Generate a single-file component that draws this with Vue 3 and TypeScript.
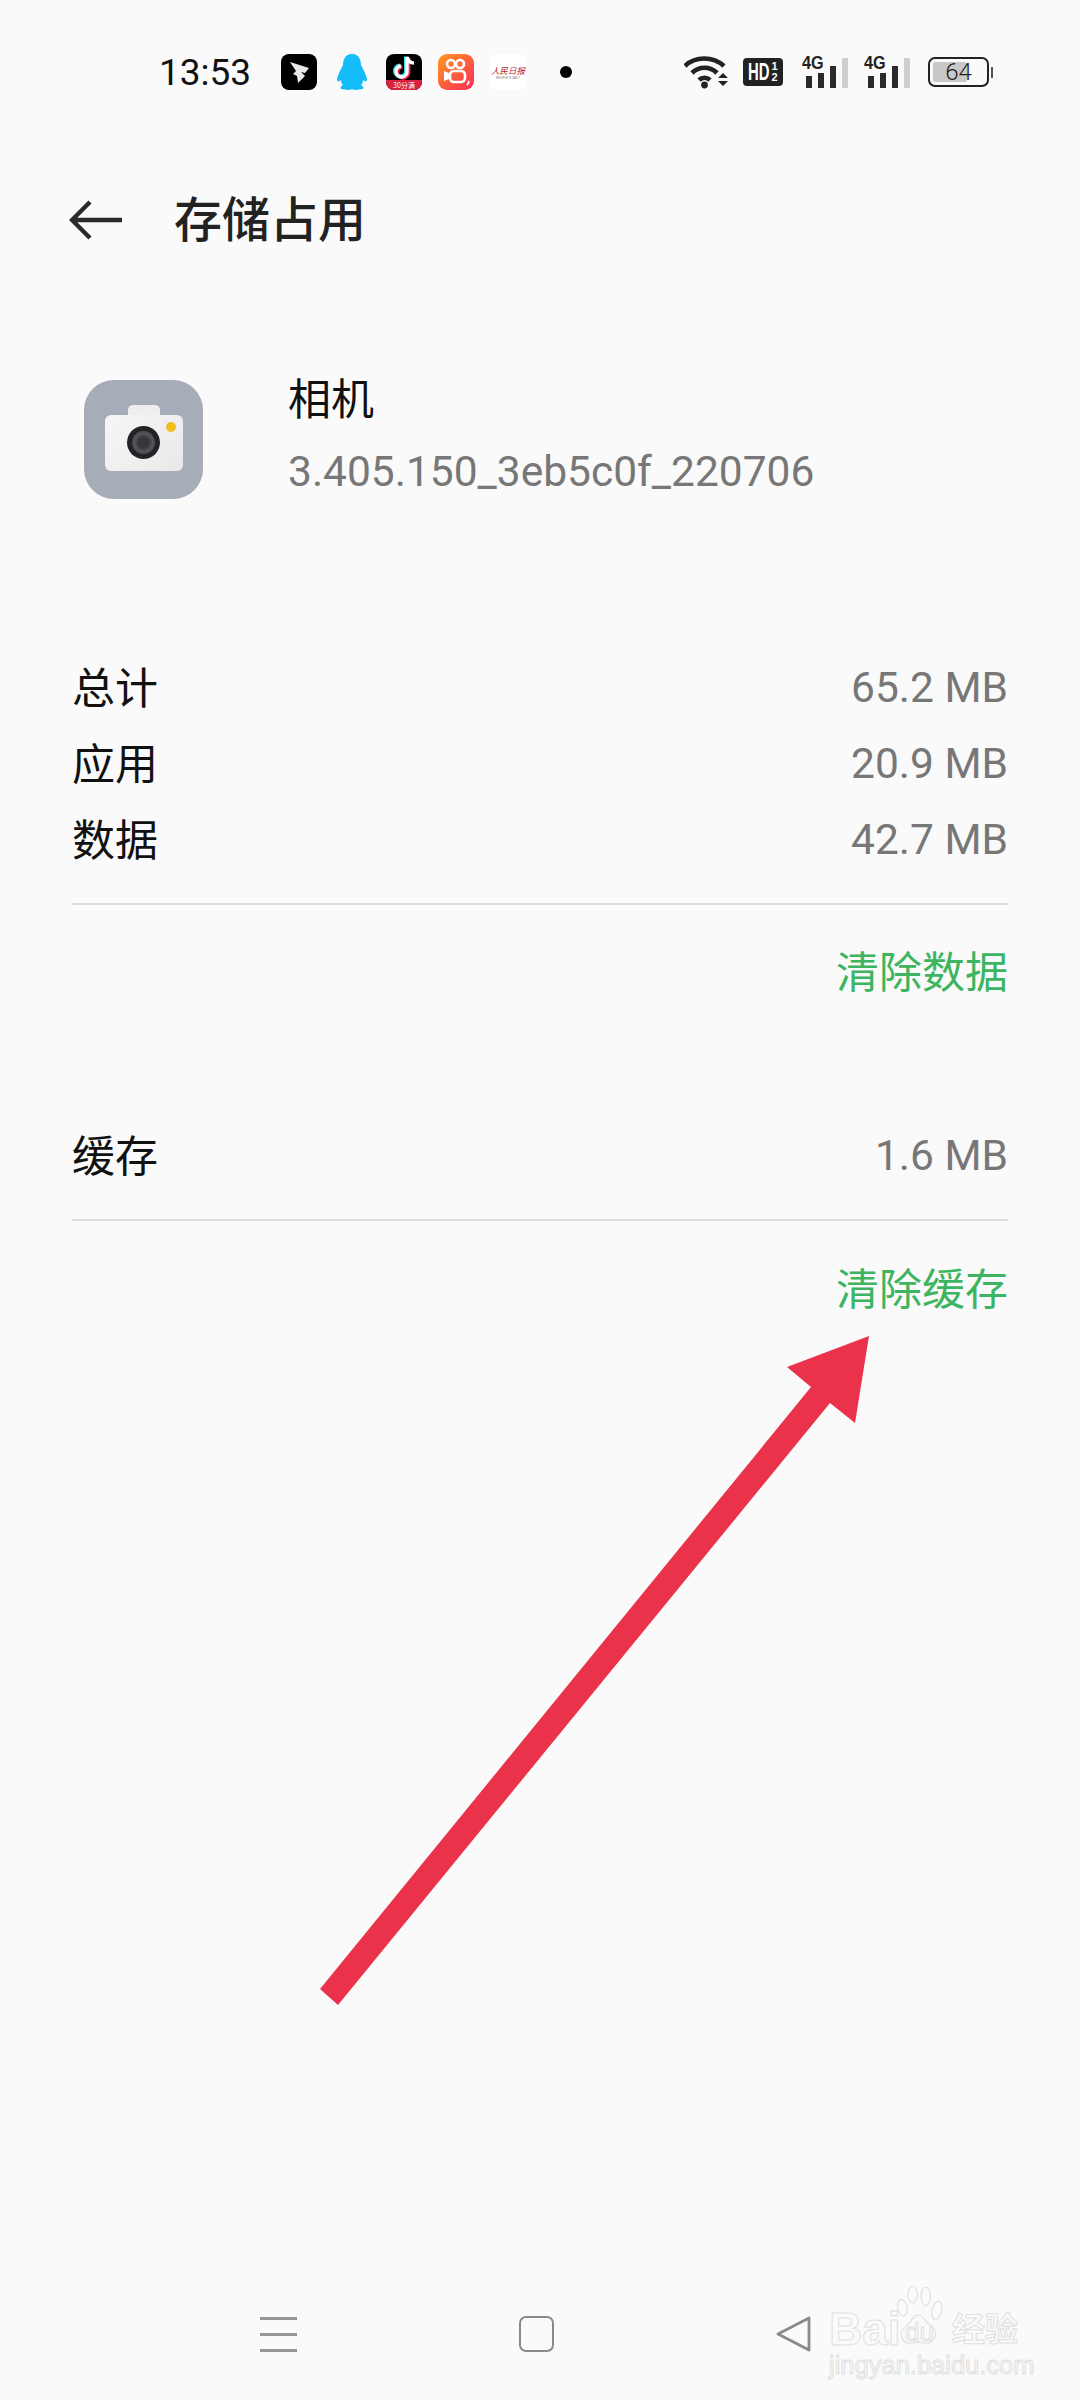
<script setup lang="ts">
const sizes = [
  { label: '总计', value: '65.2 MB' },
  { label: '应用', value: '20.9 MB' },
  { label: '数据', value: '42.7 MB' },
]
const bars = [12, 15, 22, 30]
</script>

<template>
  <div class="page">
    <div class="status">
      <span class="time">13:53</span>
      <div class="notifs">
        <svg class="ic" viewBox="0 0 36 36">
          <rect width="36" height="36" rx="8" fill="#000" />
          <path d="M9 8 L28 14 L24 19 L20 18 L24 22 L17 29 L16 22 L12 20 L15 17 Z" fill="#e9e9e9" />
        </svg>
        <svg class="qq" viewBox="0 0 32 36">
          <path d="M16 0 C23 0 25 6 25 11 C27 15 30 20 31 25 C31 28 29 28 27 26 C27 29 26 30 25 31 C27 32 28 33 27 35 L19 36 C17 35 15 35 13 36 L5 35 C4 33 5 32 7 31 C6 30 5 29 5 26 C3 28 1 28 1 25 C2 20 5 15 7 11 C7 6 9 0 16 0 Z" fill="#14bdf7" />
        </svg>
        <div class="douyin">
          <svg class="ic-note" viewBox="0 0 36 26">
            <path d="M21 3 L21 17 A5.5 5.5 0 1 1 15 12" fill="none" stroke="#f5285a" stroke-width="4" transform="translate(1.4 .8)" />
            <path d="M21 3 L21 17 A5.5 5.5 0 1 1 15 12" fill="none" stroke="#3ce0e8" stroke-width="4" transform="translate(-1 -.6)" />
            <path d="M21 3 L21 17 A5.5 5.5 0 1 1 15 12 M21 3 C22 7 25 9 28 9" fill="none" stroke="#fff" stroke-width="3.4" />
          </svg>
          <span class="dy-band">30分满</span>
        </div>
        <svg class="ic" viewBox="0 0 36 36">
          <defs>
            <linearGradient id="ks" x1="0" y1="0" x2="1" y2="1">
              <stop offset="0" stop-color="#ff9a1f" />
              <stop offset="1" stop-color="#fb2a5c" />
            </linearGradient>
          </defs>
          <rect width="36" height="36" rx="9" fill="url(#ks)" />
          <g fill="none" stroke="#fff" stroke-width="2.6">
            <circle cx="13" cy="10" r="4" />
            <circle cx="22" cy="10" r="4" />
            <rect x="12" y="17" width="15" height="11" rx="4" />
          </g>
          <path d="M11 19 L6 17 L6 27 L11 25 Z" fill="#fff" />
          <path d="M30 27 L31 28 L29 31" stroke="#fff" stroke-width="1.6" fill="none" />
        </svg>
        <div class="daily">
          <span class="daily-name">人民日报</span>
          <span class="daily-en">PEOPLE'S DAILY</span>
        </div>
      </div>
      <span class="dot"></span>
      <div class="sys">
        <svg class="wifi" viewBox="0 0 44 34">
          <g fill="none" stroke="#222" stroke-width="4.6">
            <path d="M1 11 C11 1 29 1 40 11" />
            <path d="M8 18 C15 11 26 11 33 18" />
            <path d="M15 25 C18 22 23 22 26 25" />
          </g>
          <circle cx="20.5" cy="30" r="3.4" fill="#222" />
          <path d="M34 23 L44 23 L39 18 Z M34 26 L44 26 L39 31 Z" fill="#222" />
        </svg>
        <div class="hd"><span class="hd-main">HD</span><span class="hd-sub">1<br />2</span></div>
        <div v-for="n in 2" :key="n" class="signal">
          <span class="four-g">4G</span>
          <div class="bars">
            <i v-for="(h, i) in bars" :key="h" :class="{ off: i === 3 }" :style="{ height: h + 'px' }"></i>
          </div>
        </div>
        <div class="battery">
          <div class="batt-body"><span class="batt-fill"></span><span class="batt-num">64</span></div>
          <span class="batt-nub"></span>
        </div>
      </div>
    </div>

    <header class="head">
      <svg class="back" viewBox="0 0 54 42">
        <path d="M21 3 L3 21 L21 39 M3 21 L53 21" fill="none" stroke="#2a2a2a" stroke-width="4.4" />
      </svg>
      <h1>存储占用</h1>
    </header>

    <section class="app">
      <div class="app-icon">
        <div class="cam-top"></div>
        <div class="cam">
          <span class="lens"></span>
          <span class="flash"></span>
        </div>
      </div>
      <div class="app-text">
        <div class="app-name">相机</div>
        <div class="app-ver">3.405.150_3eb5c0f_220706</div>
      </div>
    </section>

    <section class="sizes">
      <div v-for="r in sizes" :key="r.label" class="row">
        <span class="label">{{ r.label }}</span>
        <span class="value">{{ r.value }}</span>
      </div>
    </section>
    <div class="line"></div>
    <div class="action">清除数据</div>

    <section class="cache">
      <div class="row">
        <span class="label">缓存</span>
        <span class="value">1.6 MB</span>
      </div>
    </section>
    <div class="line line2"></div>
    <div class="action action2">清除缓存</div>

    <nav class="nav">
      <div class="menu"><i></i><i></i><i></i></div>
      <div class="home"></div>
      <svg class="tri" viewBox="0 0 35 36">
        <path d="M33 2 L2 18 L33 34 Z" fill="none" stroke="#8a8a8a" stroke-width="2.8" stroke-linejoin="round" />
      </svg>
    </nav>

    <!-- annotation drawn over the screenshot -->
    <svg class="arrow" viewBox="0 0 1080 2400">
      <path d="M320 1989 L811 1387 L787 1367 L869 1336 L855 1423 L830 1403 L338 2005 Z" fill="#ea334a" />
    </svg>

    <div class="mark">
      <svg class="paw" viewBox="0 0 60 66">
        <g fill="#fafafa" stroke="#e2e2e2" stroke-width="1.4">
          <ellipse cx="9" cy="24" rx="5" ry="9" transform="rotate(-12 9 24)" />
          <ellipse cx="20" cy="10" rx="5" ry="9" />
          <ellipse cx="34" cy="12" rx="5" ry="10" />
          <ellipse cx="46" cy="27" rx="5" ry="10" transform="rotate(14 46 27)" />
          <path d="M26 32 C32 32 33 40 40 44 C48 49 44 63 34 62 C28 61 24 61 18 62 C8 63 4 50 12 45 C19 41 19 32 26 32 Z" />
        </g>
      </svg>
      <span class="mark-bai">Bai</span>
      <span class="mark-du">du</span>
      <span class="mark-jy">经验</span>
      <span class="mark-url">jingyan.baidu.com</span>
    </div>
  </div>
</template>

<style scoped>
.page {
  position: relative;
  width: 1080px;
  height: 2400px;
  overflow: hidden;
  background: #fafafa;
  font-family: "Noto Sans CJK SC", Roboto, sans-serif;
}
.status {
  height: 144px;
  display: flex;
  align-items: center;
  box-sizing: border-box;
  padding-left: 159px;
}
.time {
  width: 122px;
  font: 400 37px Roboto, sans-serif;
  color: #111;
}
.notifs {
  display: flex;
  align-items: center;
  gap: 16px;
  width: 245px;
}
.ic { width: 36px; height: 36px; display: block; }
.qq { width: 32px; height: 36px; display: block; margin-left: 3px; margin-right: 2px; }
.douyin {
  width: 36px;
  height: 36px;
  background: #000;
  border-radius: 8px;
  overflow: hidden;
  display: flex;
  flex-direction: column;
}
.ic-note { width: 36px; height: 26px; display: block; }
.dy-band {
  height: 10px;
  line-height: 10px;
  background: #d8203f;
  color: #fff;
  font-size: 7px;
  text-align: center;
}
.daily {
  width: 36px;
  height: 36px;
  background: #fff;
  border-radius: 8px;
  display: flex;
  flex-direction: column;
  align-items: center;
  justify-content: center;
  overflow: hidden;
}
.daily-name { font: italic 8.5px/11px "Noto Sans CJK SC", sans-serif; color: #b3262b; white-space: nowrap; }
.daily-en { font: 3px/4px "Liberation Sans", sans-serif; color: #777; white-space: nowrap; }
.dot {
  width: 12px;
  height: 12px;
  border-radius: 50%;
  background: #000;
  margin-left: 34px;
}
.sys {
  display: flex;
  align-items: center;
  margin-left: 112px;
}
.wifi { width: 44px; height: 34px; display: block; margin-right: 15px; }
.hd {
  width: 40px;
  height: 28px;
  background: #222;
  border-radius: 4px;
  color: #fff;
  display: flex;
  align-items: center;
  justify-content: center;
  margin-right: 19px;
  font-family: "Liberation Sans", sans-serif;
  font-weight: 700;
}
.hd-main {
  font-size: 24px;
  width: 22px;
  transform: scaleX(0.62);
  transform-origin: left center;
  white-space: nowrap;
}
.hd-sub { font-size: 11px; line-height: 11px; margin-left: 1px; }
.signal {
  width: 46px;
  height: 32px;
  position: relative;
  margin-right: 16px;
}
.four-g {
  position: absolute;
  left: 0;
  top: -2px;
  font: 700 18px/18px "Liberation Sans", sans-serif;
  transform: scaleX(0.9);
  transform-origin: left top;
  color: #222;
}
.bars {
  position: absolute;
  left: 4px;
  right: 0;
  bottom: 0;
  display: flex;
  align-items: flex-end;
  gap: 6px;
}
.bars i {
  width: 6px;
  background: #2a2a2a;
  display: block;
}
.bars i.off { background: #cfcfcf; }
.battery { display: flex; align-items: center; gap: 2px; margin-left: 2px; }
.batt-body {
  position: relative;
  width: 61px;
  height: 30px;
  box-sizing: border-box;
  border: 2px solid #222;
  border-radius: 7px;
}
.batt-fill {
  position: absolute;
  left: 3px;
  top: 3px;
  bottom: 3px;
  width: 34px;
  background: #c9c9c9;
  border-radius: 2px;
}
.batt-num {
  position: absolute;
  inset: 0;
  text-align: center;
  font: 300 24px/26px Roboto, sans-serif;
  color: #222;
}
.batt-nub { width: 2px; height: 11px; background: #555; }

.head {
  height: 152px;
  display: flex;
  align-items: center;
  padding-left: 69px;
  box-sizing: border-box;
}
.back { width: 54px; height: 42px; display: block; }
h1 {
  margin: -8px 0 0 51px;
  font-size: 48px;
  font-weight: 500;
  color: #222;
  line-height: 1;
}
.app {
  display: flex;
  align-items: flex-start;
  padding: 84px 0 0 84px;
  gap: 85px;
}
.app-icon {
  position: relative;
  width: 119px;
  height: 119px;
  border-radius: 30px;
  background: #a6acb8;
  flex: none;
}
.cam-top {
  position: absolute;
  left: 44px;
  top: 25px;
  width: 32px;
  height: 14px;
  background: #eeeeef;
  border-radius: 5px 5px 0 0;
}
.cam {
  position: absolute;
  left: 21px;
  top: 35px;
  width: 78px;
  height: 56px;
  background: linear-gradient(135deg, #f6f6f6, #e9e9ea);
  border-radius: 6px;
}
.lens {
  position: absolute;
  left: 22px;
  top: 11px;
  width: 33px;
  height: 33px;
  border-radius: 50%;
  background: radial-gradient(circle, #35363b 0 5px, #55565c 9px, #4b4c52 11px, #232327 12px);
}
.flash {
  position: absolute;
  left: 61px;
  top: 7px;
  width: 10px;
  height: 10px;
  border-radius: 50%;
  background: #f2be1f;
}
.app-text { margin-top: -9px; }
.app-name {
  font-size: 43px;
  line-height: 50px;
  color: #111;
}
.app-ver {
  margin-top: 26px;
  font: 400 42.5px/50px Roboto, sans-serif;
  color: #777;
}
.sizes {
  margin-top: 148px;
  padding: 0 72px;
}
.cache {
  margin-top: 118px;
  padding: 0 72px;
}
.row {
  height: 76px;
  display: flex;
  align-items: center;
  justify-content: space-between;
}
.label { font-size: 43px; color: #111; }
.value { font: 400 42.5px Roboto, sans-serif; color: #777; margin-top: 4px; }
.line {
  height: 2px;
  margin: 28px 72px 0 72px;
  background: #dcdcdc;
}
.line2 { margin-top: 28px; }
.action {
  margin: 36px 72px 0 0;
  text-align: right;
  font-size: 43px;
  line-height: 56px;
  color: #3db560;
}
.action2 { margin-top: 37px; }
.nav {
  position: absolute;
  left: 260px;
  top: 2316px;
  display: flex;
  align-items: center;
}
.menu { width: 37px; display: flex; flex-direction: column; gap: 13px; }
.menu i { display: block; height: 3px; background: #969696; }
.home {
  width: 35px;
  height: 36px;
  box-sizing: border-box;
  border: 2.6px solid #8a8a8a;
  border-radius: 7px;
  margin-left: 222px;
}
.tri { width: 35px; height: 36px; display: block; margin-left: 222px; }
.arrow {
  position: absolute;
  inset: 0;
  width: 1080px;
  height: 2400px;
  pointer-events: none;
}
.mark {
  position: absolute;
  left: 829px;
  top: 2285px;
  width: 200px;
  height: 100px;
  color: #fafafa;
  -webkit-text-stroke: 1px #e0e0e0;
  font-family: "Liberation Sans", sans-serif;
}
.paw { position: absolute; left: 65px; top: 0; width: 56px; height: 62px; }
.mark-bai { position: absolute; left: 0; top: 21px; font-size: 46px; line-height: 46px; font-weight: 700; }
.mark-du { position: absolute; left: 76px; top: 32px; font-size: 26px; line-height: 30px; }
.mark-jy { position: absolute; left: 123px; top: 22px; font: 700 33px/40px "Noto Sans CJK SC", sans-serif; }
.mark-url { position: absolute; left: 0; top: 66px; font-size: 25.5px; line-height: 28px; white-space: nowrap; }
</style>
